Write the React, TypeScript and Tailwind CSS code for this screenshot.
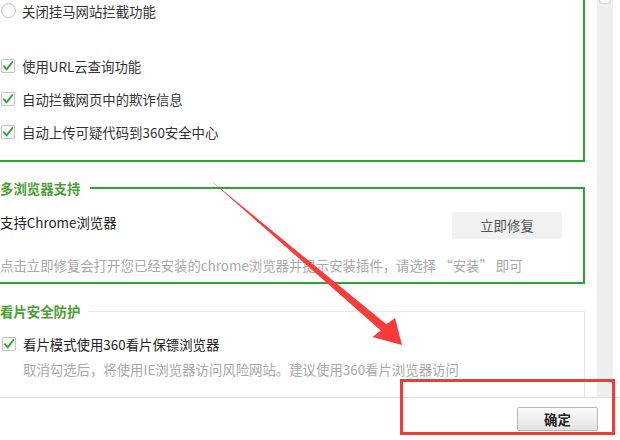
import React from "react";

const font = { fontFamily: '"Noto Sans CJK SC", "Microsoft YaHei", sans-serif' };

const Check = () => (
  <span className="w-[14px] h-[14px] shrink-0 border border-[#c4c4c4] bg-white rounded-[1px] flex items-center justify-center">
    <svg width="12" height="12" viewBox="0 0 12 12">
      <path d="M1.8 6.2 L4.6 9.4 L10.4 2" fill="none" stroke="#3aa336" strokeWidth="2" strokeLinecap="round" strokeLinejoin="round" />
    </svg>
  </span>
);

const CheckRow = ({ label }: { label: string }) => (
  <div className="h-[33px] flex items-center gap-[7px]">
    <Check />
    <span className="text-[13.4px] leading-[20px] text-[#333]">{label}</span>
  </div>
);

export default function App() {
  return (
    <div className="relative w-[620px] h-[440px] overflow-hidden bg-white" style={font}>
      <div className="flex h-[397px]">
        {/* scrolled content */}
        <div className="w-[597px] h-full overflow-hidden">
          {/* section 1, top scrolled away */}
          <div className="w-[595px] -ml-[10px] border-x-2 border-b-2 border-[#2ba335] pl-[9px] pb-[12px]">
            <div className="h-[21px] flex items-center gap-[6px]">
              <span className="w-[15px] h-[15px] rounded-full border border-[#c4c4c4] bg-gradient-to-b from-[#f4f4f4] to-white" />
              <span className="text-[13.4px] leading-[20px] text-[#333]">关闭挂马网站拦截功能</span>
            </div>
            <div className="mt-[28px]">
              <CheckRow label="使用URL云查询功能" />
              <CheckRow label="自动拦截网页中的欺诈信息" />
              <CheckRow label="自动上传可疑代码到360安全中心" />
            </div>
          </div>

          {/* section 2 */}
          <fieldset className="w-[595px] -ml-[10px] mt-[16px] border-2 border-[#2ba335] pl-[8px] pr-[21px] pb-[7px]">
            <legend className="pr-[10px] text-[13.4px] leading-[20px] font-bold text-[#4a9f34]">多浏览器支持</legend>
            <div className="pt-[14px] flex justify-between items-start">
              <span className="text-[13.4px] leading-[20px] text-[#222]">支持Chrome浏览器</span>
              <button className="w-[110px] h-[27px] bg-[#f1f1f1] rounded-[2px] text-[13.4px] text-[#555]">立即修复</button>
            </div>
            <div className="mt-[16px] text-[13.4px] leading-[20px] text-[#a8a8a8] whitespace-nowrap">
              点击立即修复会打开您已经安装的chrome浏览器并提示安装插件，请选择 “安装” 即可
            </div>
          </fieldset>

          {/* section 3 */}
          <fieldset className="w-[595px] -ml-[10px] mt-[17px] border border-[#e6e6e6] pl-[9px] pb-[20px]">
            <legend className="pr-[9px] text-[13.4px] leading-[20px] font-bold text-[#4a9f34]">看片安全防护</legend>
            <div className="pt-[13px] pl-[2px]">
              <div className="h-[20px] flex items-center gap-[7px]">
                <Check />
                <span className="text-[13.4px] leading-[20px] text-[#222]">看片模式使用360看片保镖浏览器</span>
              </div>
              <div className="mt-[5px] pl-[21px] text-[13.4px] leading-[20px] text-[#a8a8a8] whitespace-nowrap">
                取消勾选后，将使用IE浏览器访问风险网站。建议使用360看片浏览器访问
              </div>
            </div>
          </fieldset>
        </div>

        {/* scrollbar */}
        <div className="w-[16px] h-full bg-[#eeeeee] flex justify-center">
          <div className="w-[12px] h-[4px] bg-[#fafafa] border-x border-b border-[#d4d4d4] rounded-b-[6px]" />
        </div>
        <div className="flex-1 bg-white" />
      </div>

      {/* footer */}
      <div className="h-[43px] border-t border-[#dedede] bg-white flex justify-end pr-[22px] pt-[9px]">
        <button className="w-[81px] h-[24px] rounded-[2px] border border-[#b8b8b8] bg-gradient-to-b from-[#fbfbfb] to-[#e2e2e2] text-[13.4px] font-bold text-[#222]">
          确定
        </button>
      </div>

      {/* annotations */}
      <svg className="absolute inset-0 pointer-events-none" width="620" height="440" viewBox="0 0 620 440">
        <polygon points="209,179 386.3,324.3 395,318 402,345 372.5,337 380.8,330.6" fill="#f83a3a" />
      </svg>
      <div className="absolute left-[400px] top-[379px] w-[215px] h-[56px] border-[3px] border-[#f23a3a] pointer-events-none" />
    </div>
  );
}
